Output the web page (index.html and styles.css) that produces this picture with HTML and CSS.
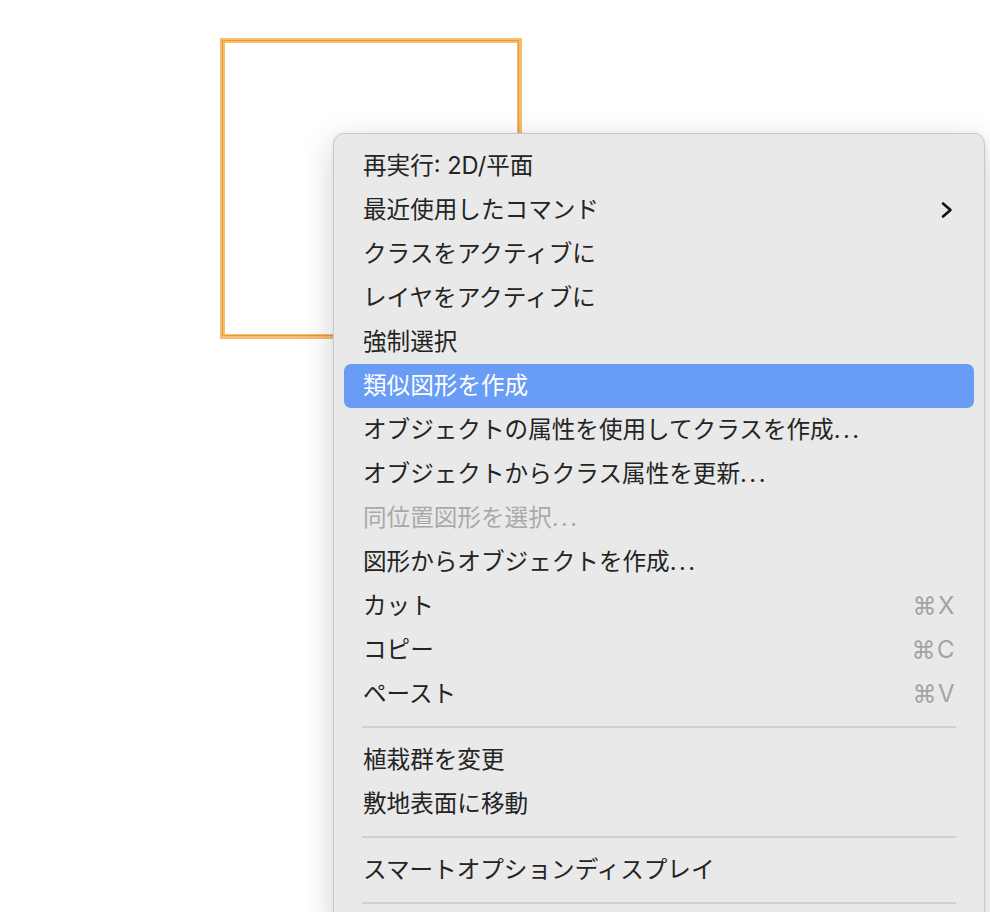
FILE: index.html
```html
<!DOCTYPE html>
<html lang="ja">
<head>
<meta charset="utf-8">
<link rel="stylesheet" href="styles.css">
</head>
<body>
<div class="canvas">
  <div class="shape"></div>
  <div class="menu">
    <div class="item"><span class="label">再実行: 2D/平面</span></div>
    <div class="item"><span class="label">最近使用したコマンド</span>
      <svg class="chev" width="14" height="18" viewBox="0 0 14 18"><polyline points="3,2.5 10.5,9 3,15.5" fill="none" stroke="#111" stroke-width="2.6" stroke-linecap="round" stroke-linejoin="round"/></svg>
    </div>
    <div class="item"><span class="label">クラスをアクティブに</span></div>
    <div class="item"><span class="label">レイヤをアクティブに</span></div>
    <div class="item"><span class="label">強制選択</span></div>
    <div class="item active"><span class="label">類似図形を作成</span></div>
    <div class="item"><span class="label">オブジェクトの属性を使用してクラスを作成<span class="dots">...</span></span></div>
    <div class="item"><span class="label">オブジェクトからクラス属性を更新<span class="dots">...</span></span></div>
    <div class="item disabled"><span class="label">同位置図形を選択<span class="dots">...</span></span></div>
    <div class="item"><span class="label">図形からオブジェクトを作成<span class="dots">...</span></span></div>
    <div class="item"><span class="label">カット</span><span class="key">⌘X</span></div>
    <div class="item"><span class="label">コピー</span><span class="key">⌘C</span></div>
    <div class="item"><span class="label">ペースト</span><span class="key">⌘V</span></div>
    <div class="sep"></div>
    <div class="item"><span class="label">植栽群を変更</span></div>
    <div class="item"><span class="label">敷地表面に移動</span></div>
    <div class="sep"></div>
    <div class="item"><span class="label">スマートオプションディスプレイ</span></div>
    <div class="sep"></div>
  </div>
</div>
</body>
</html>
```

FILE: styles.css
```css
* { box-sizing: border-box; }
html, body {
  margin: 0;
  padding: 0;
  width: 990px;
  height: 912px;
  overflow: hidden;
  background: #ffffff;
}
body {
  font-family: "Inter", "Noto Sans CJK JP", sans-serif;
}
.canvas {
  position: relative;
  width: 990px;
  height: 912px;
  overflow: hidden;
}
.shape {
  position: absolute;
  left: 220px;
  top: 38px;
  width: 302px;
  height: 301px;
  border: 5px solid #f6bd6c;
}
.shape::before {
  content: "";
  position: absolute;
  left: -3px;
  top: -3px;
  right: -2px;
  bottom: -2px;
  border: 1.5px solid #e9993d;
}
.menu {
  position: absolute;
  left: 333px;
  top: 133px;
  width: 652px;
  height: 800px;
  background: #e9e9e9;
  border: 1px solid #c9c9c9;
  border-radius: 11px;
  box-shadow: 0 10px 34px rgba(0, 0, 0, 0.18), 0 0 4px rgba(0, 0, 0, 0.06);
  padding: 10px 10px 0 10px;
  display: flex;
  flex-direction: column;
}
.item {
  flex: 0 0 44px;
  height: 44px;
  display: flex;
  align-items: center;
  justify-content: space-between;
  padding: 0 19px 0 19px;
  border-radius: 7px;
  font-size: 23.6px;
  color: #242424;
  white-space: nowrap;
}
.label {
  line-height: 1;
}
.dots {
  letter-spacing: 2.5px;
}
.item.active {
  background: #699cf4;
  color: #ffffff;
}
.item.disabled {
  color: #a9a9a9;
}
.key {
  color: #a3a3a3;
  font-size: 24px;
  line-height: 1;
  letter-spacing: 1.5px;
  margin-right: -1px;
}
.chev {
  margin-right: 1px;
}
.sep {
  flex: 0 0 22px;
  height: 22px;
  display: flex;
  align-items: center;
  padding: 0 18px 0 18px;
}
.sep::before {
  content: "";
  flex: 1;
  height: 2px;
  background: #d0d0d0;
}
```
